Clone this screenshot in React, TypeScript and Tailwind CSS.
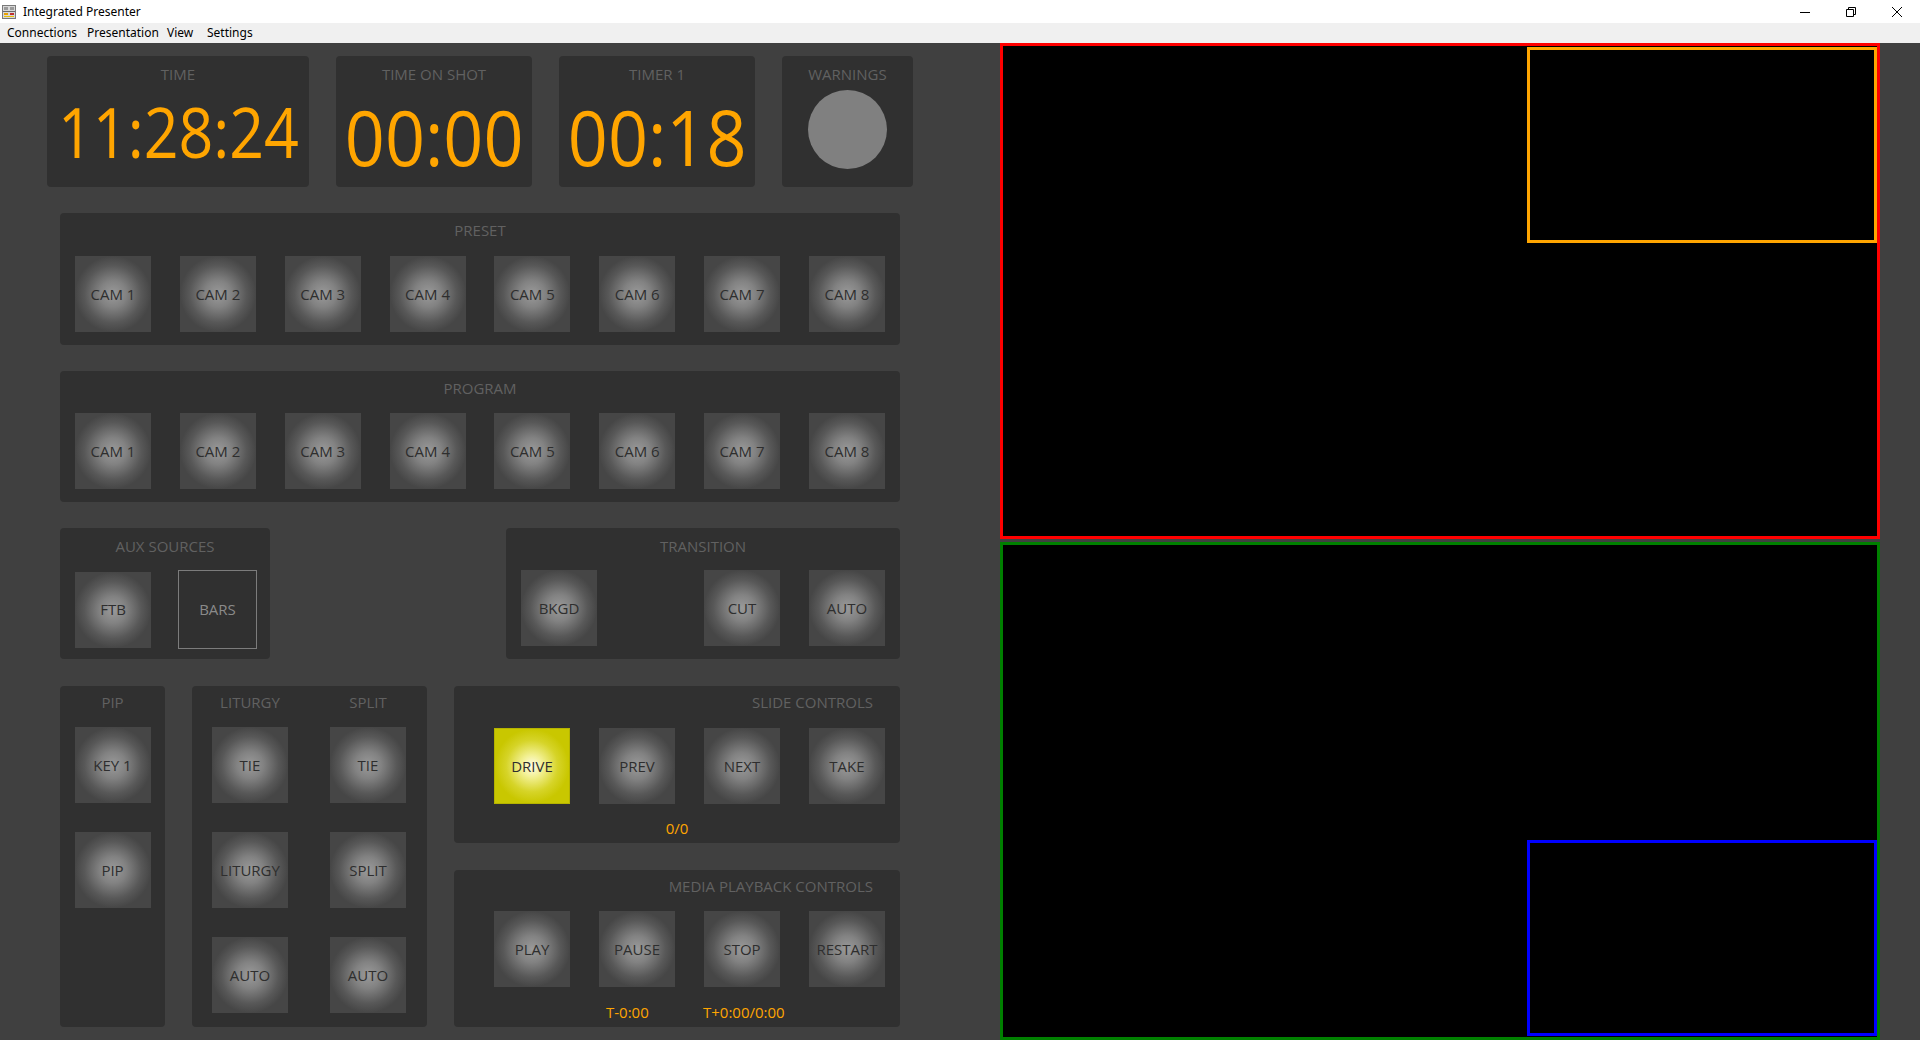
import React from "react";

const btnBase =
  "w-[76px] h-[76px] flex items-center justify-center text-[15px] text-[#2e2e2e] shrink-0";
const btnGrad =
  "bg-[radial-gradient(circle_closest-side,#9a9a9a_0%,#828282_35%,#585858_75%,#464646_100%)] bg-[#464646]";

function Btn({ label }: { label: string }) {
  return <div className={`${btnBase} ${btnGrad}`}>{label}</div>;
}

function DriveBtn() {
  return (
    <div
      className={`${btnBase} border border-[#b5b300] bg-[radial-gradient(circle_closest-side,#fffce8_0%,#f2f092_30%,#d6d428_70%,#c9c700_100%)] bg-[#c9c700]`}
    >
      DRIVE
    </div>
  );
}

function Label({ children, className = "" }: { children: React.ReactNode; className?: string }) {
  return (
    <div className={`h-[24px] leading-[24px] text-[15px] text-[#616161] ${className}`}>{children}</div>
  );
}

function TimerBox({
  title,
  value,
  width,
  size,
  mt,
  scale,
}: {
  title: string;
  value: string;
  width: string;
  size: string;
  mt: string;
  scale: string;
}) {
  return (
    <div className={`${width} h-[131px] bg-[#303030] rounded-[4px] flex flex-col items-center pt-[6px]`}>
      <Label>{title}</Label>
      <div className={`${mt} ${size} ${scale} w-max shrink-0 leading-none text-[#ffa500] whitespace-nowrap`}>{value}</div>
    </div>
  );
}

export default function App() {
  const cams = ["CAM 1", "CAM 2", "CAM 3", "CAM 4", "CAM 5", "CAM 6", "CAM 7", "CAM 8"];
  return (
    <div className="w-[1920px] h-[1040px] flex flex-col bg-[#404040] overflow-hidden font-['Open_Sans','Noto_Sans',sans-serif]">
      {/* Title bar */}
      <div className="h-[23px] bg-white flex items-center shrink-0">
        <svg width="16" height="16" viewBox="0 0 16 16" className="ml-[1px]">
          <rect x="1" y="1" width="14" height="14" fill="#7a7a7a" />
          <rect x="2" y="2" width="12" height="12" fill="#d8d8d8" />
          <rect x="2" y="7" width="12" height="1" fill="#6a6a6a" />
          <rect x="3" y="3" width="4" height="3" fill="#9a9a9a" />
          <rect x="9" y="3" width="4" height="3" fill="#9a9a9a" />
          <rect x="3" y="9" width="4" height="2" fill="#e8a000" />
          <rect x="9" y="9" width="4" height="2" fill="#c03030" />
          <rect x="3" y="12" width="10" height="1" fill="#e8c000" />
        </svg>
        <span className="ml-[6px] text-[12px] text-black font-['Noto_Sans',sans-serif]">Integrated Presenter</span>
        <div className="ml-auto flex items-center h-full">
          <div className="w-[46px] h-full flex items-center justify-center">
            <svg width="10" height="10" viewBox="0 0 10 10">
              <path d="M0 5.5H10" stroke="#000" strokeWidth="1" />
            </svg>
          </div>
          <div className="w-[46px] h-full flex items-center justify-center">
            <svg width="10" height="10" viewBox="0 0 10 10">
              <path d="M0.5 2.5H7.5V9.5H0.5Z M2.5 2.5V0.5H9.5V7.5H7.5" stroke="#000" strokeWidth="1" fill="none" />
            </svg>
          </div>
          <div className="w-[46px] h-full flex items-center justify-center">
            <svg width="10" height="10" viewBox="0 0 10 10">
              <path d="M0 0L10 10M10 0L0 10" stroke="#000" strokeWidth="1" />
            </svg>
          </div>
        </div>
      </div>
      {/* Menu bar */}
      <div className="h-[20px] bg-[#f0f0f0] flex items-center text-[12px] text-black shrink-0 font-['Noto_Sans',sans-serif]">
        <span className="ml-[7px] w-[80px]">Connections</span>
        <span className="w-[80px]">Presentation</span>
        <span className="w-[40px]">View</span>
        <span>Settings</span>
      </div>
      {/* Content */}
      <div className="flex flex-row flex-1">
        {/* Left */}
        <div className="w-[1000px] flex flex-col">
          {/* Timers */}
          <div className="mt-[13px] ml-[47px] flex gap-[27px]">
            <TimerBox title="TIME" value="11:28:24" width="w-[262px]" size="text-[70px]" mt="mt-[10px]" scale="scale-x-[0.87]" />
            <TimerBox title="TIME ON SHOT" value="00:00" width="w-[196px]" size="text-[77px]" mt="mt-[12px]" scale="scale-x-[0.91]" />
            <TimerBox title="TIMER 1" value="00:18" width="w-[196px]" size="text-[77px]" mt="mt-[12px]" scale="scale-x-[0.91]" />
            <div className="w-[131px] h-[131px] bg-[#303030] rounded-[4px] flex flex-col items-center pt-[6px]">
              <Label>WARNINGS</Label>
              <div className="mt-[4px] w-[79px] h-[79px] rounded-full bg-[#808080]" />
            </div>
          </div>
          {/* Preset */}
          <div className="mt-[26px] ml-[60px] w-[840px] h-[132px] bg-[#303030] rounded-[4px] flex flex-col pt-[5px]">
            <Label className="text-center">PRESET</Label>
            <div className="mt-[14px] px-[15px] flex justify-between">
              {cams.map((c) => (
                <Btn key={c} label={c} />
              ))}
            </div>
          </div>
          {/* Program */}
          <div className="mt-[26px] ml-[60px] w-[840px] h-[131px] bg-[#303030] rounded-[4px] flex flex-col pt-[5px]">
            <Label className="text-center">PROGRAM</Label>
            <div className="mt-[13px] px-[15px] flex justify-between">
              {cams.map((c) => (
                <Btn key={c} label={c} />
              ))}
            </div>
          </div>
          {/* Aux + Transition */}
          <div className="mt-[26px] ml-[60px] w-[840px] h-[131px] flex justify-between">
            <div className="w-[210px] h-full bg-[#303030] rounded-[4px] flex flex-col pt-[6px]">
              <Label className="text-center">AUX SOURCES</Label>
              <div className="mt-[12px] pl-[15px] flex items-center gap-[27px]">
                <Btn label="FTB" />
                <div className="w-[79px] h-[79px] border border-[#7c7c7c] flex items-center justify-center text-[15px] text-[#8a8a8a]">
                  BARS
                </div>
              </div>
            </div>
            <div className="w-[394px] h-full bg-[#303030] rounded-[4px] flex flex-col pt-[6px]">
              <Label className="text-center">TRANSITION</Label>
              <div className="mt-[12px] px-[15px] flex">
                <Btn label="BKGD" />
                <div className="ml-auto flex gap-[29px]">
                  <Btn label="CUT" />
                  <Btn label="AUTO" />
                </div>
              </div>
            </div>
          </div>
          {/* Bottom row */}
          <div className="mt-[27px] ml-[60px] w-[840px] h-[341px] flex gap-[27px]">
            <div className="w-[105px] h-full bg-[#303030] rounded-[4px] flex flex-col items-center pt-[4px]">
              <Label>PIP</Label>
              <div className="mt-[13px] flex flex-col gap-[29px]">
                <Btn label="KEY 1" />
                <Btn label="PIP" />
              </div>
            </div>
            <div className="w-[235px] h-full bg-[#303030] rounded-[4px] flex flex-col pt-[4px] pl-[20px]">
              <div className="flex gap-[42px]">
                <Label className="w-[76px] text-center">LITURGY</Label>
                <Label className="w-[76px] text-center">SPLIT</Label>
              </div>
              <div className="mt-[13px] grid grid-cols-[76px_76px] gap-x-[42px] gap-y-[29px]">
                <Btn label="TIE" />
                <Btn label="TIE" />
                <Btn label="LITURGY" />
                <Btn label="SPLIT" />
                <Btn label="AUTO" />
                <Btn label="AUTO" />
              </div>
            </div>
            <div className="w-[446px] h-full flex flex-col gap-[27px]">
              <div className="h-[157px] bg-[#303030] rounded-[4px] flex flex-col pt-[4px]">
                <Label className="text-right pr-[27px]">SLIDE CONTROLS</Label>
                <div className="mt-[14px] pl-[40px] pr-[15px] flex justify-between">
                  <DriveBtn />
                  <Btn label="PREV" />
                  <Btn label="NEXT" />
                  <Btn label="TAKE" />
                </div>
                <div className="mt-[12px] text-center text-[15px] leading-[24px] text-[#ffa500]">0/0</div>
              </div>
              <div className="h-[157px] bg-[#303030] rounded-[4px] flex flex-col pt-[4px]">
                <Label className="text-right pr-[27px]">MEDIA PLAYBACK CONTROLS</Label>
                <div className="mt-[13px] pl-[40px] pr-[15px] flex justify-between">
                  <Btn label="PLAY" />
                  <Btn label="PAUSE" />
                  <Btn label="STOP" />
                  <Btn label="RESTART" />
                </div>
                <div className="mt-[13px] flex text-[15px] leading-[24px] text-[#ffa500]">
                  <span className="ml-[152px] w-[97px]">T-0:00</span>
                  <span>T+0:00/0:00</span>
                </div>
              </div>
            </div>
          </div>
        </div>
        {/* Right previews */}
        <div className="w-[880px] flex flex-col">
          <div className="h-[496px] border-[3px] border-[#ff0000] bg-black flex justify-end items-start">
            <div className="mt-[1px] w-[350px] h-[196px] border-[3px] border-[#ffa500] bg-black" />
          </div>
          <div className="mt-[3px] h-[498px] border-[3px] border-[#008000] bg-black flex justify-end items-end">
            <div className="mb-[1px] w-[350px] h-[196px] border-[3px] border-[#0000ff] bg-black" />
          </div>
        </div>
      </div>
    </div>
  );
}
